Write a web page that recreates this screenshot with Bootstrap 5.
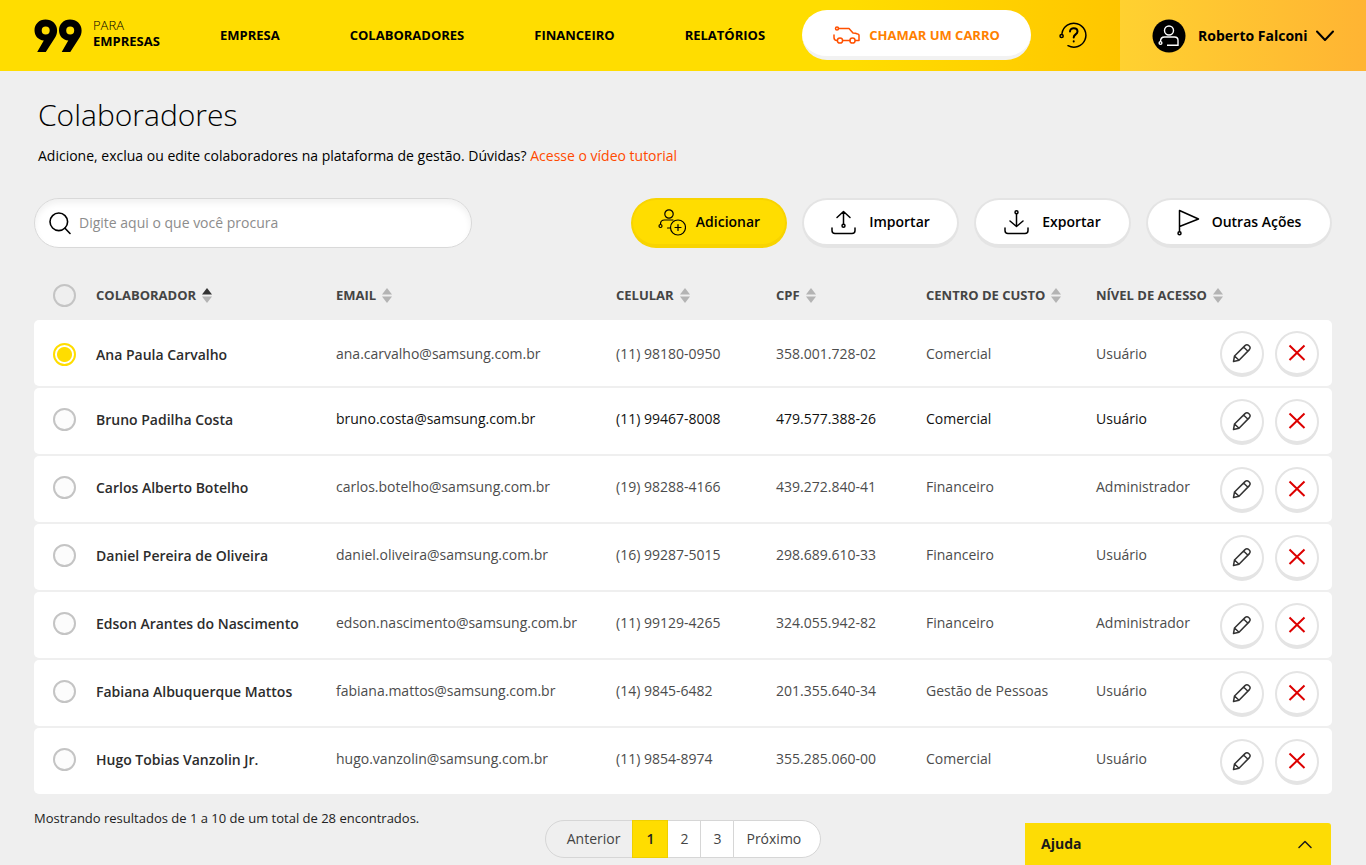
<!DOCTYPE html>
<html lang="pt-BR">
<head>
<meta charset="utf-8">
<meta name="viewport" content="width=device-width, initial-scale=1">
<title>99 para Empresas - Colaboradores</title>
<link href="https://cdn.jsdelivr.net/npm/bootstrap@5.3.0/dist/css/bootstrap.min.css" rel="stylesheet">
<style>
:root { --amarelo: #ffdd00; --cinza: #efefef; --borda: #e4e4e4; }
body { background: var(--cinza); color: #000; font-family: "Open Sans", "Noto Sans", sans-serif; font-size: 14px; line-height: 20px; }
svg { display: block; flex-shrink: 0; }
.traco { fill: none; stroke: currentColor; stroke-width: 1.5; stroke-linecap: round; stroke-linejoin: round; }
.topo { background: linear-gradient(90deg, #ffdd00 62%, #ffc400 84%); min-height: 71px; }
.marca { color: #000; width: 186px; padding-left: 34px; font-size: 13px; line-height: 16px; }
.marca-texto { margin: 0 0 5px 11px; }
.menu-topo { gap: 70px; margin: 0 0 1px 34px; }
.menu-topo a { color: #000; font-size: 13px; font-weight: 700; }
.chamar { width: 229px; height: 50px; margin: 0 0 2px 37px; border: 0; border-bottom: 4px solid #f2f2f2; border-radius: 25px; background: #fff; color: #ff8000; font-size: 13px; font-weight: 700; padding: 4px 0 0; }
.chamar svg { color: #ff5000; }
.ajuda-icone { margin: 0 0 2px 28px; border: 0; background: none; padding: 0; color: #000; }
.usuario { width: 246px; min-height: 71px; border: 0; padding: 0 32px; background: linear-gradient(90deg, #ffd130, #ffb433); font-weight: 700; color: #000; }
.conteudo { padding: 23px 34px 0; }
h1 { font-size: 30px; line-height: 42px; font-weight: 300; margin: 0 4px; }
.intro { margin: 10px 4px 32px; }
.intro a { color: #ff4a00; }
.busca { width: 438px; height: 50px; border: 1px solid #d9d9d9; border-radius: 25px; background: #fff; box-shadow: inset 0 4px 6px rgba(0,0,0,.06); padding: 0 14px; gap: 8px; }
.busca input { border: 0; outline: 0; background: none; color: #333; }
.busca input::placeholder { color: #8c8c8c; opacity: 1; }
.acoes { gap: 15px; }
.acao { height: 50px; width: 157px; border: 2px solid var(--borda); border-bottom-width: 4px; border-radius: 25px; background: #fff; color: #000; font-weight: 600; gap: 12px; padding: 0; }
.acao.principal { width: 156px; background: var(--amarelo); border-color: #f8d400; gap: 10px; }
.acao.larga { width: 186px; }
.lista { border-collapse: separate; border-spacing: 0 2px; table-layout: fixed; width: 100%; min-width: 1298px; margin-top: 22px; }
.lista thead th { height: 46px; font-size: 13px; font-weight: 700; color: #444; }
.lista th, .lista td { padding: 0; vertical-align: middle; white-space: nowrap; }
.lista tbody th, .lista tbody td { background: #fff; height: 66px; padding-bottom: 4px; }
.lista tbody th { font-weight: 600; color: #2c2c2c; padding-bottom: 2px; }
.lista tbody td { font-weight: 400; color: #4c4c4c; }
.lista tbody .ativa td { color: #111; }
.lista tbody tr:first-child td { padding: 2px 0 0; }
.lista tbody tr:first-child th { padding: 4px 0 0; }
.lista tbody td:first-child { border-radius: 5px 0 0 5px; }
.lista tbody td:last-child { border-radius: 0 5px 5px 0; }
.lista tbody tr:not(:first-child) td:last-child { padding: 2px 0 0; }
.lista th:first-child, .lista tbody tr td:first-child { padding-left: 19px; }
.marcador { appearance: none; display: block; width: 23px; height: 23px; margin: 0; border: 2px solid #c4c4c4; border-radius: 50%; background: #fcfcfc; }
thead .marcador { background: transparent; }
.marcador:checked { border-color: var(--amarelo); background: radial-gradient(circle, var(--amarelo) 7px, #fff 8px); }
.ordem { border: 0; background: none; padding: 0; font: inherit; color: inherit; display: flex; align-items: center; gap: 6px; }
.botoes { gap: 11px; }
.redondo { width: 44px; height: 46px; border: 2px solid var(--borda); border-bottom-width: 4px; border-radius: 22px/23px; background: #fff; color: #333; padding: 0; display: flex; align-items: center; justify-content: center; }
.redondo.excluir { color: #dd0000; }
.redondo.excluir .traco { stroke-width: 2; stroke-linecap: butt; }
.rodape { padding-top: 24px; }
.resumo { font-size: 13px; color: #222; margin-top: -12px; }
.paginas .page-link { height: 38px; padding: 8px 12px; border-color: #d6d6d6; background: #fff; color: #444; font-size: 14px; line-height: 20px; }
.paginas .page-item:first-child .page-link { border-radius: 19px 0 0 19px; padding-left: 21px; background: var(--cinza); }
.paginas .page-item:last-child .page-link { border-radius: 0 19px 19px 0; padding-right: 19px; }
.paginas .active .page-link { background: var(--amarelo); border-color: #efd000; color: #222; font-weight: 600; padding: 8px 13px; }
.ajuda { right: 35px; bottom: 0; width: 306px; height: 42px; border: 0; border-radius: 0 3px 0 0; background: #fddc05; color: #1a1a1a; font-weight: 700; padding: 0 19px 0 16px; }
</style>
</head>
<body>
<svg width="0" height="0" class="position-absolute" aria-hidden="true">
  <symbol id="i-lapis" viewBox="0 0 20 20"><path d="M1.500 18.500l1-5.500L13 2.600c2.500-2.300 6.600 1.200 4.400 4L7 17.200zM2.500 13L7 17.200M11.500 4l4.500 4.200"/></symbol>
  <symbol id="i-xis" viewBox="0 0 18 18"><path d="M1.500 1.500l15 14.500M16.500 1.500L1.500 16"/></symbol>
  <symbol id="i-ordem" viewBox="0 0 10 15"><path d="M0 6.500L5 0l5 6.500z"/><path fill="#b4b4b4" d="M0 8.500h10L5 15z"/></symbol>
</svg>

<header class="topo d-flex align-items-center">
  <a href="#" class="marca d-flex align-items-center text-decoration-none flex-shrink-0">
    <svg width="48" height="34" viewBox="0 0 48 34" role="img" aria-label="99">
      <g id="nove"><path fill-rule="evenodd" d="M11.500 0.500C5 .5 .5 5.300 .5 11.200c0 5.800 4 9.800 9.300 10.300L3.200 33h8.600l9.300-14.600c1.300-2.100 2-4.300 2-7C23.100 5 18.100.5 11.500.5zm.2 6.900a4 4 0 1 1 0 8 4 4 0 0 1 0-8z"/></g>
      <use href="#nove" x="24.500"/>
    </svg>
    <span class="marca-texto"><span class="fw-light d-block">PARA</span><strong>EMPRESAS</strong></span>
  </a>
  <nav class="menu-topo d-flex" aria-label="Principal">
    <a href="#" class="text-decoration-none">EMPRESA</a>
    <a href="#" class="text-decoration-none">COLABORADORES</a>
    <a href="#" class="text-decoration-none">FINANCEIRO</a>
    <a href="#" class="text-decoration-none">RELATÓRIOS</a>
  </nav>
  <button type="button" class="chamar d-flex align-items-center justify-content-center gap-2 flex-shrink-0">
    <svg class="traco" width="28" height="18" viewBox="0 0 28 18"><circle cx="4" cy="2.500" r="1.500"/><path d="M5.500 2.500H16l4 4.500c3 .3 5.500.8 6 2v5.500h-3.500M17 14.500h-7M4 14.500c-2 0-3-1-3-3V9"/><circle cx="7" cy="14.500" r="2.600"/><circle cx="19.500" cy="14.500" r="2.600"/></svg>
    CHAMAR UM CARRO
  </button>
  <button type="button" class="ajuda-icone flex-shrink-0" aria-label="Ajuda">
    <svg class="traco" width="28" height="28" viewBox="0 0 28 28"><path d="M3 12.500A12 12 0 1 1 9 24.700"/><circle cx="2.600" cy="15" r="1.600"/><path stroke-width="2.500" style="stroke-width:2" d="M11 10.500c0-4.500 7.500-4.300 7.500 0 0 3-3.800 2.800-3.800 6M14.700 20.200v.2"/></svg>
  </button>
  <button type="button" class="usuario d-flex align-items-center ms-auto flex-shrink-0">
    <svg width="34" height="34" viewBox="0 0 34 34"><circle cx="17" cy="17" r="16.500"/><g fill="none" stroke="#fff" stroke-width="1.400"><circle cx="17" cy="11.500" r="4.500"/><path d="M15 26.300h11v-5c0-2.200-1.300-3.300-3.500-3.300h-10C10 18 8.500 19.500 8.500 22.500"/><circle cx="8.500" cy="24" r="1.400"/></g></svg>
    <span class="mx-2 ps-1">Roberto Falconi</span>
    <svg class="traco" width="18" height="12" viewBox="0 0 18 12"><path stroke-width="2" d="M1 1.500l8 8.500 8-8.500"/></svg>
  </button>
</header>

<main class="conteudo">
  <h1>Colaboradores</h1>
  <p class="intro">Adicione, exclua ou edite colaboradores na plataforma de gestão. Dúvidas? <a href="#" class="text-decoration-none">Acesse o vídeo tutorial</a></p>

  <div class="d-flex justify-content-between flex-wrap gap-3">
    <label class="busca d-flex align-items-center">
      <svg class="traco" width="22" height="23" viewBox="0 0 22 23"><circle cx="9.800" cy="9.800" r="8.800" stroke-width="1.600"/><path stroke-width="1.600" d="M16 16.200l5 5.300"/></svg>
      <input type="text" class="flex-grow-1 p-0" aria-label="Procurar colaborador" placeholder="Digite aqui o que você procura">
    </label>
    <div class="acoes d-flex flex-wrap">
      <button type="button" class="acao principal d-flex align-items-center justify-content-center">
        <svg class="traco" width="28" height="27" viewBox="0 0 28 27"><g stroke-width="1.200"><circle cx="11" cy="5" r="4.200"/><path d="M2.500 15c0-3 1.500-4 4-4H15M9.500 19H12"/><circle cx="2.500" cy="17" r="1.500"/><circle cx="20" cy="18.500" r="7.500"/><path d="M20 15.500v6M17 18.500h6"/></g></svg>
        Adicionar
      </button>
      <button type="button" class="acao d-flex align-items-center justify-content-center">
        <svg class="traco" width="26" height="25" viewBox="0 0 26 25"><path d="M1 18v2.500c0 2 1 3 3 3h17c2 0 3-1 3-3V18M12.500 14V1.500M6 7.500l6.500-6 6.500 6"/><circle cx="12.500" cy="15.700" r="1.500"/></svg>
        Importar
      </button>
      <button type="button" class="acao d-flex align-items-center justify-content-center">
        <svg class="traco" width="26" height="25" viewBox="0 0 26 25"><path d="M1 18v2.500c0 2 1 3 3 3h17c2 0 3-1 3-3V18M12.500 4v12M6 11l6.500 5.500L19 11"/><circle cx="12.500" cy="2.300" r="1.500"/></svg>
        Exportar
      </button>
      <button type="button" class="acao larga d-flex align-items-center justify-content-center">
        <svg class="traco" width="23" height="27" viewBox="0 0 23 27"><path d="M2.500 22.500V1.500L21.500 10 2.500 17.500"/><circle cx="2.500" cy="24.300" r="1.500"/></svg>
        Outras Ações
      </button>
    </div>
  </div>

  <div class="table-responsive">
  <table class="lista">
    <colgroup><col style="width:62px"><col style="width:240px"><col style="width:280px"><col style="width:160px"><col style="width:150px"><col style="width:170px"><col style="width:124px"><col style="width:112px"></colgroup>
    <thead>
      <tr>
        <th><input type="radio" class="marcador" name="pessoa" aria-label="Todos"></th>
        <th><button type="button" class="ordem">COLABORADOR <svg width="10" height="15" fill="#333"><use href="#i-ordem"/></svg></button></th>
        <th><button type="button" class="ordem">EMAIL <svg width="10" height="15" fill="#b4b4b4"><use href="#i-ordem"/></svg></button></th>
        <th><button type="button" class="ordem">CELULAR <svg width="10" height="15" fill="#b4b4b4"><use href="#i-ordem"/></svg></button></th>
        <th><button type="button" class="ordem">CPF <svg width="10" height="15" fill="#b4b4b4"><use href="#i-ordem"/></svg></button></th>
        <th><button type="button" class="ordem">CENTRO DE CUSTO <svg width="10" height="15" fill="#b4b4b4"><use href="#i-ordem"/></svg></button></th>
        <th><button type="button" class="ordem">NÍVEL DE ACESSO <svg width="10" height="15" fill="#b4b4b4"><use href="#i-ordem"/></svg></button></th>
        <th></th>
      </tr>
    </thead>
    <tbody>
      <tr>
        <td><input type="radio" class="marcador" name="pessoa" id="p1" checked></td>
        <th scope="row"><label for="p1">Ana Paula Carvalho</label></th>
        <td>ana.carvalho@samsung.com.br</td><td>(11) 98180-0950</td><td>358.001.728-02</td><td>Comercial</td><td>Usuário</td>
        <td><div class="d-flex botoes"><button type="button" class="redondo" aria-label="Editar"><svg class="traco" width="20" height="20"><use href="#i-lapis"/></svg></button><button type="button" class="redondo excluir" aria-label="Excluir"><svg class="traco" width="18" height="18"><use href="#i-xis"/></svg></button></div></td>
      </tr>
      <tr class="ativa">
        <td><input type="radio" class="marcador" name="pessoa" id="p2"></td>
        <th scope="row"><label for="p2">Bruno Padilha Costa</label></th>
        <td>bruno.costa@samsung.com.br</td><td>(11) 99467-8008</td><td>479.577.388-26</td><td>Comercial</td><td>Usuário</td>
        <td><div class="d-flex botoes"><button type="button" class="redondo" aria-label="Editar"><svg class="traco" width="20" height="20"><use href="#i-lapis"/></svg></button><button type="button" class="redondo excluir" aria-label="Excluir"><svg class="traco" width="18" height="18"><use href="#i-xis"/></svg></button></div></td>
      </tr>
      <tr>
        <td><input type="radio" class="marcador" name="pessoa" id="p3"></td>
        <th scope="row"><label for="p3">Carlos Alberto Botelho</label></th>
        <td>carlos.botelho@samsung.com.br</td><td>(19) 98288-4166</td><td>439.272.840-41</td><td>Financeiro</td><td>Administrador</td>
        <td><div class="d-flex botoes"><button type="button" class="redondo" aria-label="Editar"><svg class="traco" width="20" height="20"><use href="#i-lapis"/></svg></button><button type="button" class="redondo excluir" aria-label="Excluir"><svg class="traco" width="18" height="18"><use href="#i-xis"/></svg></button></div></td>
      </tr>
      <tr>
        <td><input type="radio" class="marcador" name="pessoa" id="p4"></td>
        <th scope="row"><label for="p4">Daniel Pereira de Oliveira</label></th>
        <td>daniel.oliveira@samsung.com.br</td><td>(16) 99287-5015</td><td>298.689.610-33</td><td>Financeiro</td><td>Usuário</td>
        <td><div class="d-flex botoes"><button type="button" class="redondo" aria-label="Editar"><svg class="traco" width="20" height="20"><use href="#i-lapis"/></svg></button><button type="button" class="redondo excluir" aria-label="Excluir"><svg class="traco" width="18" height="18"><use href="#i-xis"/></svg></button></div></td>
      </tr>
      <tr>
        <td><input type="radio" class="marcador" name="pessoa" id="p5"></td>
        <th scope="row"><label for="p5">Edson Arantes do Nascimento</label></th>
        <td>edson.nascimento@samsung.com.br</td><td>(11) 99129-4265</td><td>324.055.942-82</td><td>Financeiro</td><td>Administrador</td>
        <td><div class="d-flex botoes"><button type="button" class="redondo" aria-label="Editar"><svg class="traco" width="20" height="20"><use href="#i-lapis"/></svg></button><button type="button" class="redondo excluir" aria-label="Excluir"><svg class="traco" width="18" height="18"><use href="#i-xis"/></svg></button></div></td>
      </tr>
      <tr>
        <td><input type="radio" class="marcador" name="pessoa" id="p6"></td>
        <th scope="row"><label for="p6">Fabiana Albuquerque Mattos</label></th>
        <td>fabiana.mattos@samsung.com.br</td><td>(14) 9845-6482</td><td>201.355.640-34</td><td>Gestão de Pessoas</td><td>Usuário</td>
        <td><div class="d-flex botoes"><button type="button" class="redondo" aria-label="Editar"><svg class="traco" width="20" height="20"><use href="#i-lapis"/></svg></button><button type="button" class="redondo excluir" aria-label="Excluir"><svg class="traco" width="18" height="18"><use href="#i-xis"/></svg></button></div></td>
      </tr>
      <tr>
        <td><input type="radio" class="marcador" name="pessoa" id="p7"></td>
        <th scope="row"><label for="p7">Hugo Tobias Vanzolin Jr.</label></th>
        <td>hugo.vanzolin@samsung.com.br</td><td>(11) 9854-8974</td><td>355.285.060-00</td><td>Comercial</td><td>Usuário</td>
        <td><div class="d-flex botoes"><button type="button" class="redondo" aria-label="Editar"><svg class="traco" width="20" height="20"><use href="#i-lapis"/></svg></button><button type="button" class="redondo excluir" aria-label="Excluir"><svg class="traco" width="18" height="18"><use href="#i-xis"/></svg></button></div></td>
      </tr>
    </tbody>
  </table>
  </div>

  <div class="rodape row g-0">
    <div class="col resumo">Mostrando resultados de 1 a 10 de um total de 28 encontrados.</div>
    <nav class="col-auto" aria-label="Páginas">
      <ul class="pagination paginas mb-0">
        <li class="page-item"><a class="page-link" href="#">Anterior</a></li>
        <li class="page-item active"><a class="page-link" href="#" aria-current="page">1</a></li>
        <li class="page-item"><a class="page-link" href="#">2</a></li>
        <li class="page-item"><a class="page-link" href="#">3</a></li>
        <li class="page-item"><a class="page-link" href="#">Próximo</a></li>
      </ul>
    </nav>
    <div class="col"></div>
  </div>
</main>

<button type="button" class="ajuda position-fixed d-flex align-items-center justify-content-between">
  Ajuda
  <svg class="traco" width="14" height="9" viewBox="0 0 14 9"><path d="M1 7.500L7 1.500l6 6"/></svg>
</button>
<script src="https://cdn.jsdelivr.net/npm/bootstrap@5.3.0/dist/js/bootstrap.bundle.min.js"></script>
</body>
</html>
